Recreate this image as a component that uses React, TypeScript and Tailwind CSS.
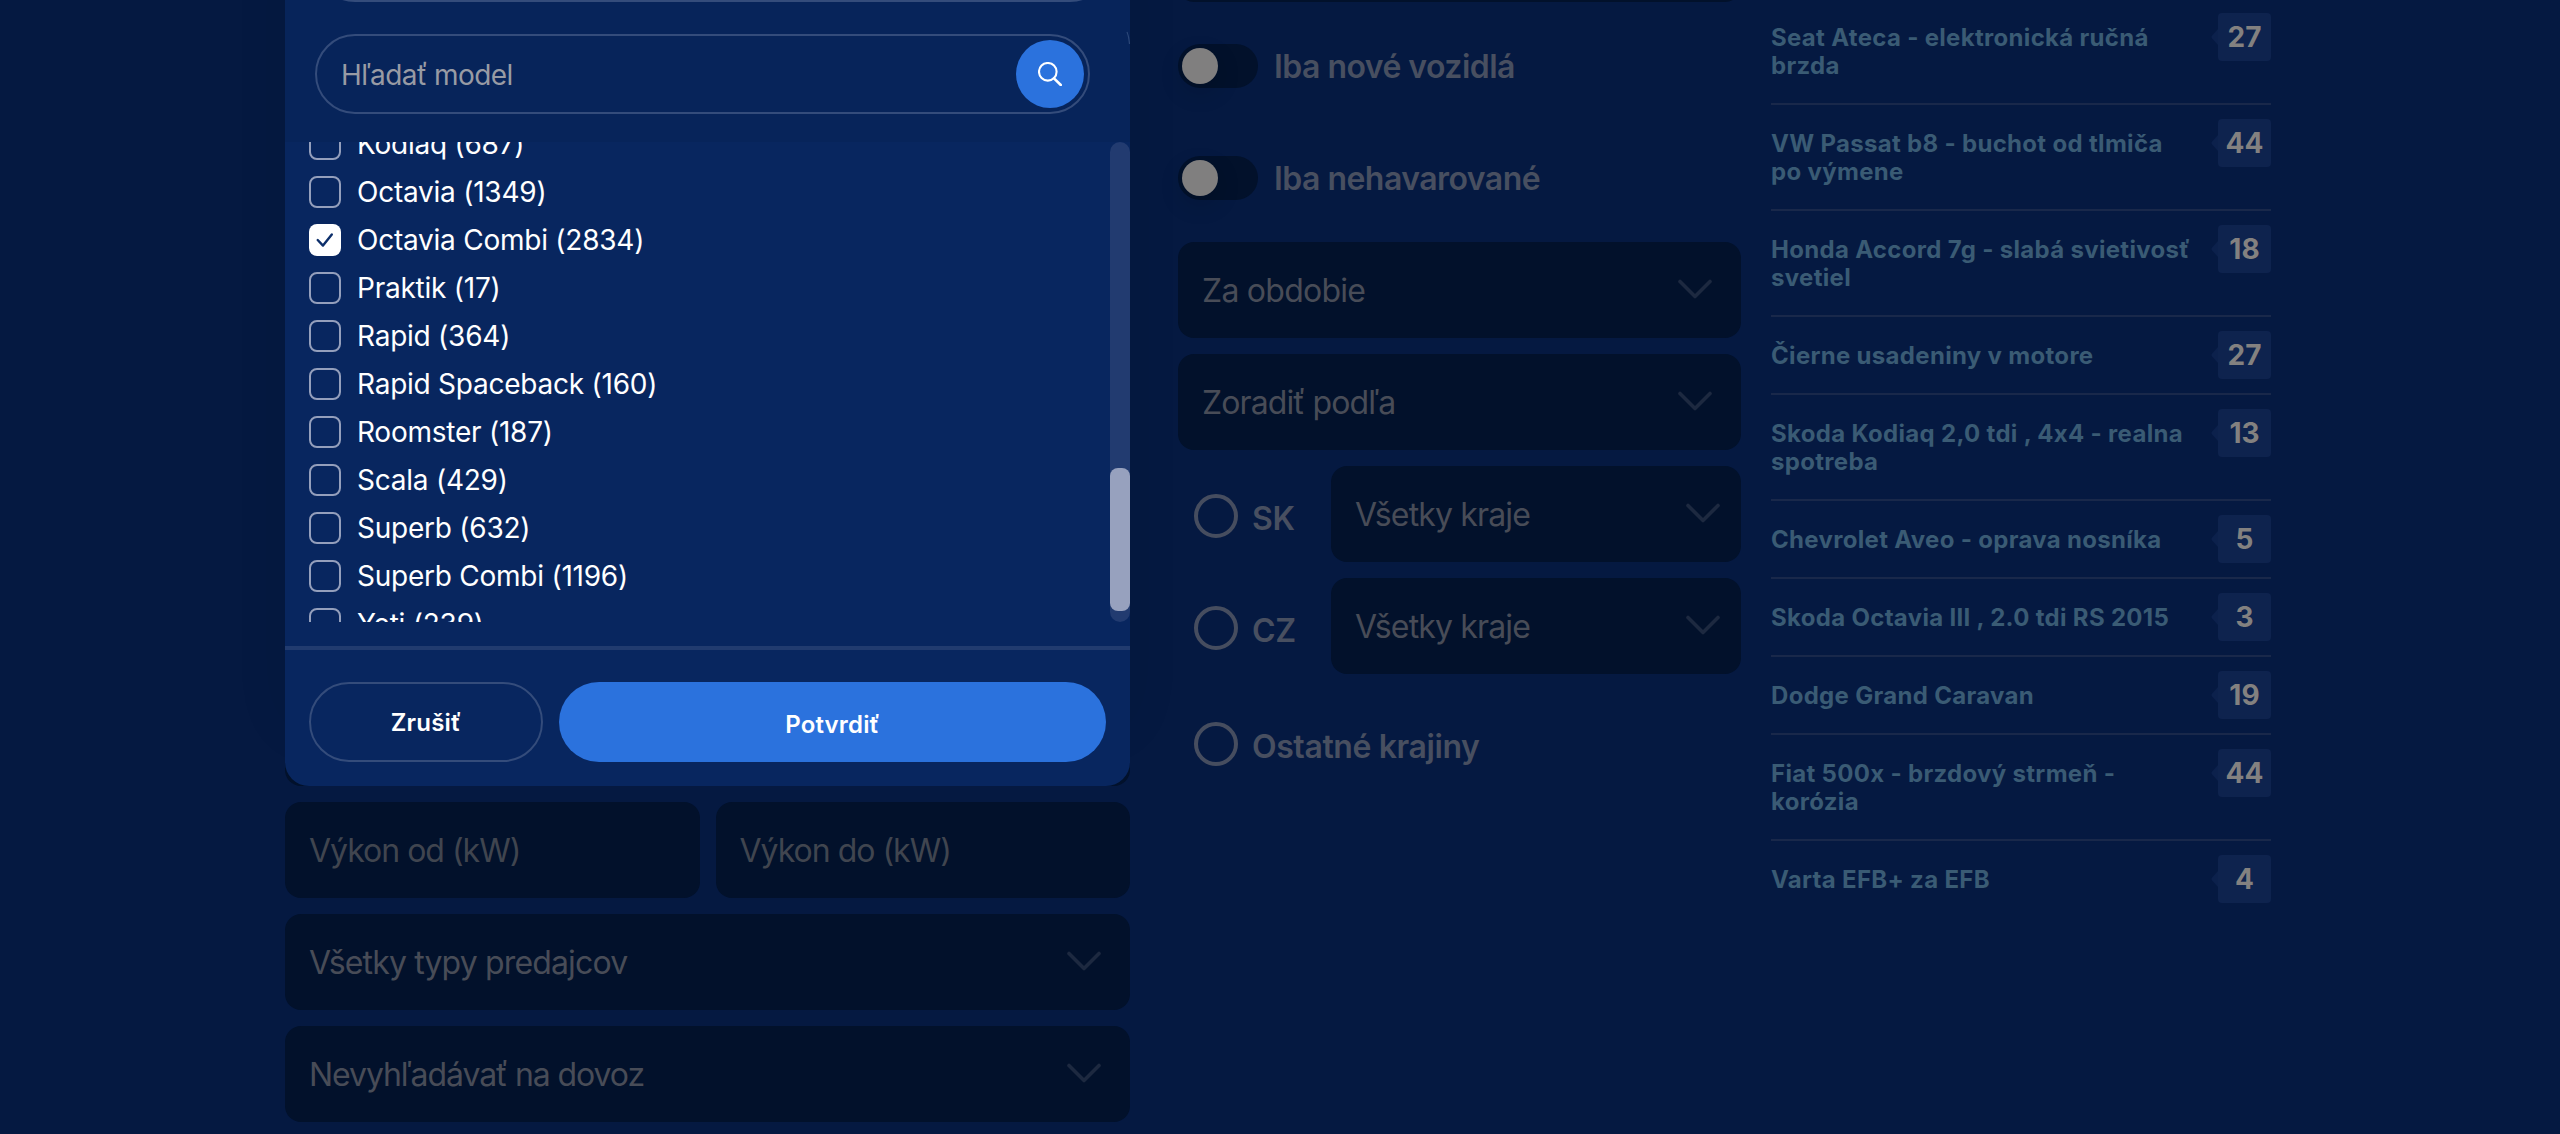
import React from "react";

const models = [
  { name: "Kodiaq", count: 687 },
  { name: "Octavia", count: 1349 },
  { name: "Octavia Combi", count: 2834, checked: true },
  { name: "Praktik", count: 17 },
  { name: "Rapid", count: 364 },
  { name: "Rapid Spaceback", count: 160 },
  { name: "Roomster", count: 187 },
  { name: "Scala", count: 429 },
  { name: "Superb", count: 632 },
  { name: "Superb Combi", count: 1196 },
  { name: "Yeti", count: 239 },
];

const topics = [
  { title: "Seat Ateca - elektronická ručná\nbrzda", replies: 27 },
  { title: "VW Passat b8 - buchot od tlmiča\npo výmene", replies: 44 },
  { title: "Honda Accord 7g - slabá svietivosť\nsvetiel", replies: 18 },
  { title: "Čierne usadeniny v motore", replies: 27 },
  { title: "Skoda Kodiaq 2,0 tdi , 4x4 - realna\nspotreba", replies: 13 },
  { title: "Chevrolet Aveo - oprava nosníka", replies: 5 },
  { title: "Skoda Octavia III , 2.0 tdi RS 2015", replies: 3 },
  { title: "Dodge Grand Caravan", replies: 19 },
  { title: "Fiat 500x - brzdový strmeň -\nkorózia", replies: 44 },
  { title: "Varta EFB+ za EFB", replies: 4 },
];

function Chevron() {
  return (
    <svg className="mb-0.5 h-5 w-[34px] shrink-0" viewBox="0 0 34 20" fill="none">
      <path d="M2 2.5 17 17.5 32 2.5" stroke="#1d2940" strokeWidth="3.6" strokeLinecap="round" strokeLinejoin="round" />
    </svg>
  );
}

function Select({ label, className = "pr-[29px] tracking-[-0.84px]" }: { label: string; className?: string }) {
  return (
    <button
      className={`flex h-24 w-full items-center justify-between rounded-2xl bg-[#02112b] pl-6 text-[32px] text-[#484c57] ${className}`}
    >
      <span className="pt-0.5">{label}</span>
      <Chevron />
    </button>
  );
}

function TextField({ label }: { label: string }) {
  return (
    <div className="flex h-24 flex-1 items-center rounded-2xl bg-[#02112b] pt-0.5 pl-6 text-[32px] tracking-[-1px] text-[#40454f]">
      {label}
    </div>
  );
}

function Checkbox({ checked }: { checked?: boolean }) {
  if (!checked) return <span className="size-8 rounded-lg border-2 border-[#949fbc]" />;
  return (
    <span className="flex size-8 items-center justify-center rounded-lg bg-white">
      <svg className="size-8" viewBox="0 0 32 32" fill="none">
        <path d="M8.7 16 14 21.6 22.8 10.4" stroke="#0d2f6b" strokeWidth="2.4" strokeLinecap="round" strokeLinejoin="round" />
      </svg>
    </span>
  );
}

function ModelDropdown() {
  return (
    <div className="rounded-b-2xl bg-[#02112b] shadow-[0_-60px_60px_rgba(0,0,0,0.06)]">
      <section className="relative flex h-[786px] flex-col overflow-hidden rounded-b-3xl bg-[#08265f]">
        <svg className="absolute top-7 right-0 h-5 w-5" viewBox="0 0 20 20" fill="none">
          <path d="M17 4C18.3 7 19 10 19.5 16" stroke="#2b4778" strokeWidth="1.2" />
        </svg>
        <header className="h-[142px] shrink-0 bg-[#07245a] pr-10 pl-[30px]">
          <div className="-mr-5 h-0.5 overflow-hidden">
            <div className="-mt-[78px] h-20 rounded-full border-2 border-[#344c7b]" />
          </div>
          <div className="mt-8 flex h-20 items-center justify-between rounded-full border-2 border-[#344c7b] pr-1 pl-6">
            <span className="pt-0.5 text-[28px] tracking-[-0.6px] text-[#989ba4]">Hľadať model</span>
            <button className="flex size-[68px] items-center justify-center rounded-full bg-[#2b72dd]">
              <svg className="size-6" viewBox="0 0 24 24" fill="none">
                <circle cx="9.8" cy="9.8" r="8.8" stroke="#fff" strokeWidth="2.1" />
                <path d="M16 16.4 22.8 23" stroke="#fff" strokeWidth="2.6" strokeLinecap="round" />
              </svg>
            </button>
          </div>
        </header>
        <div className="flex h-[480px] shrink-0">
          <ul className="flex-1 overflow-hidden pl-6">
            {models.map((m, i) => (
              <li
                key={m.name}
                className={`flex h-12 items-center gap-4 text-[28px] tracking-[-0.24px] whitespace-nowrap text-white ${i === 0 ? "-mt-[22px]" : ""}`}
              >
                <Checkbox checked={m.checked} />
                <span>
                  {m.name} ({m.count})
                </span>
              </li>
            ))}
          </ul>
          <div className="flex w-5 flex-col justify-end rounded-full bg-[#223b70] pb-[11px]">
            <div className="h-[143px] rounded-lg bg-[#97a1be]" />
          </div>
        </div>
        <footer className="mt-6 flex h-[140px] shrink-0 gap-4 border-t-4 border-[#213b6f] px-6 pt-8">
          <button className="h-20 w-[234px] rounded-full border-2 border-[#344c7b] pt-0.5 text-2xl font-semibold tracking-[0.17px] text-white">
            Zrušiť
          </button>
          <button className="h-20 flex-1 rounded-full bg-[#2b72dd] pt-1.5 text-2xl font-semibold tracking-[0.17px] text-white">
            Potvrdiť
          </button>
        </footer>
      </section>
    </div>
  );
}

function Toggle({ label }: { label: string }) {
  return (
    <label className="flex h-24 items-center gap-4 text-[32px] font-semibold tracking-[-0.54px] text-[#484f60]">
      <span className="flex h-11 w-20 items-center rounded-full bg-[#02112b] pl-1">
        <span className="size-9 rounded-full bg-[#807f7f] shadow-[0_8px_24px_rgba(0,0,0,0.15)]" />
      </span>
      <span className="pt-0.5">{label}</span>
    </label>
  );
}

function Radio({ label, className = "" }: { label: string; className?: string }) {
  return (
    <label className={`flex h-24 items-center gap-[14px] pl-4 text-[32px] font-semibold tracking-[-0.4px] text-[#484f60] ${className}`}>
      <span className="size-11 rounded-full border-4 border-[#464d5f]" />
      <span className="pt-[6px]">{label}</span>
    </label>
  );
}

function TopicRow({ title, replies }: { title: string; replies: number }) {
  return (
    <li className="flex items-start justify-between border-b-2 border-[#19284a] last:border-b-0">
      <span className="pt-[25px] pb-[23px] text-2xl leading-7 font-bold tracking-[0.31px] whitespace-pre text-[#3a5b74]">
        {title}
      </span>
      <span className="mt-[14px] flex items-center">
        <svg className="h-4 w-[7px] shrink-0" viewBox="0 0 7 16">
          <path d="M7 0V16L1.1 9.6Q-.3 8 1.1 6.4Z" fill="#0c214c" />
        </svg>
        <span className="flex h-12 w-[53px] items-center justify-center rounded-sm bg-[#0e234e] text-[28px] font-bold text-[#838180]">
          {replies}
        </span>
      </span>
    </li>
  );
}

export default function App() {
  return (
    <main className="flex h-[1134px] w-[2560px] items-start overflow-hidden bg-[#051941] pl-[285px] font-['Inter',sans-serif]">
      <div className="flex w-[845px] shrink-0 flex-col gap-4">
        <ModelDropdown />
        <div className="flex gap-4">
          <TextField label="Výkon od (kW)" />
          <TextField label="Výkon do (kW)" />
        </div>
        <Select label="Všetky typy predajcov" className="pr-[29px] tracking-[-0.85px]" />
        <Select label="Nevyhľadávať na dovoz" className="pr-[29px] tracking-[-1.08px]" />
      </div>

      <div className="ml-12 flex w-[563px] shrink-0 flex-col gap-4">
        <div className="h-0.5 overflow-hidden">
          <div className="-mt-[94px] h-24 rounded-2xl bg-[#02112b]" />
        </div>
        <Toggle label="Iba nové vozidlá" />
        <Toggle label="Iba nehavarované" />
        <Select label="Za obdobie" className="pr-[29px] tracking-[-0.75px]" />
        <Select label="Zoradiť podľa" className="pr-[29px] tracking-[-0.9px]" />
        <div className="flex">
          <Radio label="SK" className="w-[153px] shrink-0 pt-1" />
          <Select label="Všetky kraje" className="pr-[21px] tracking-[-0.84px]" />
        </div>
        <div className="flex">
          <Radio label="CZ" className="w-[153px] shrink-0 pt-1" />
          <Select label="Všetky kraje" className="pr-[21px] tracking-[-0.84px]" />
        </div>
        <Radio label="Ostatné krajiny" className="pt-3" />
      </div>

      <ul className="-mt-px ml-[30px] w-[500px] shrink-0">
        {topics.map((t) => (
          <TopicRow key={t.title} {...t} />
        ))}
      </ul>
    </main>
  );
}
